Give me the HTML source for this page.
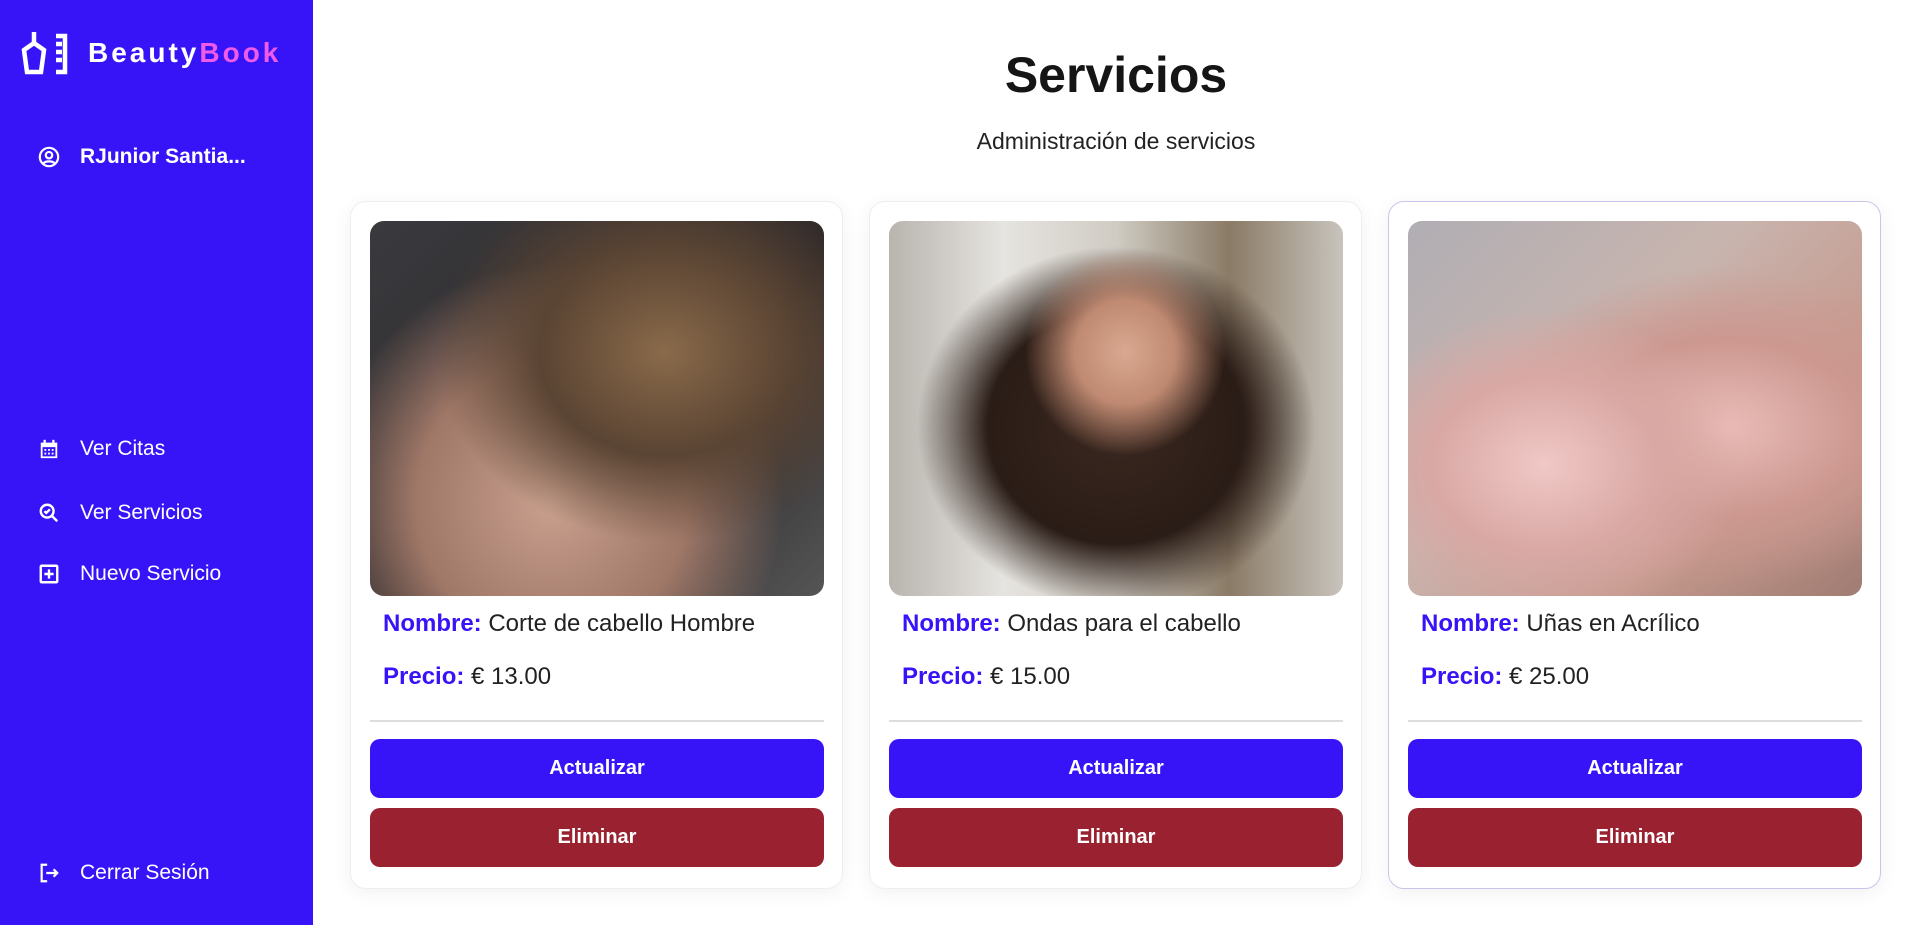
<!DOCTYPE html>
<html><head><meta charset="utf-8"><style>
*{box-sizing:border-box;margin:0;padding:0}
body{width:1919px;height:925px;overflow:hidden;background:#fff;font-family:"Liberation Sans",sans-serif;position:relative}
.side{position:absolute;left:0;top:0;width:313px;height:925px;background:#3714f7;color:#fff}
.logo{position:absolute;left:20px;top:30px;display:flex;align-items:center}
.logo span{font-size:28px;font-weight:900;letter-spacing:3px;margin-left:18px}
.item{position:absolute;left:38px;display:flex;align-items:center;font-size:21px}
.item svg{margin-right:20px}
h1{position:absolute;left:313px;right:0;top:46px;text-align:center;font-size:50px;font-weight:bold;color:#151515}
.sub{position:absolute;left:313px;right:0;top:128px;text-align:center;font-size:23px;color:#222}
.card{position:absolute;top:201px;width:493px;height:688px;border:1px solid #eee;border-radius:16px;background:#fff;box-shadow:0 4px 20px rgba(0,0,0,.06)}
.img{position:absolute;left:19px;top:19px;width:454px;height:375px;border-radius:14px}
.t{position:absolute;left:32px;font-size:24px;color:#222}
.t b{color:#3714f7}
.hr{position:absolute;left:19px;width:454px;top:518px;border-top:2px solid #ddd}
.btn{position:absolute;left:19px;width:454px;height:59px;border-radius:10px;color:#fff;font-weight:bold;font-size:20px;display:flex;align-items:center;justify-content:center}
.a{top:537px;background:#3714f7}.e{top:606px;background:#9a2230}
</style></head><body>
<div class="side">
<div class="logo"><svg width="50" height="46" viewBox="0 0 50 46" fill="none" stroke="#fff" stroke-width="4.5"><path d="M14 2v11M4 20l10-7 10 7-3 22H7z"/><path d="M36 6h9v36h-9M36 14h6M36 22h6M36 30h6"/></svg><span>Beauty<span style="margin:0;color:#f05ae8;letter-spacing:3px">Book</span></span></div>
<div class="item" style="top:145px;font-weight:bold;font-size:21px"><svg width="22" height="22" viewBox="0 0 24 24" fill="none" stroke="#fff" stroke-width="2.4"><circle cx="12" cy="12" r="10"/><circle cx="12" cy="10" r="3.5"/><path d="M6 19c2-3 10-3 12 0"/></svg>RJunior Santia...</div>
<div class="item" style="top:437px"><svg width="22" height="22" viewBox="0 0 24 24" fill="#fff"><path d="M3 5h18v17H3zM5 10v10h14V10z"/><rect x="6" y="2" width="2.5" height="4"/><rect x="15.5" y="2" width="2.5" height="4"/><rect x="7" y="12" width="2" height="2"/><rect x="11" y="12" width="2" height="2"/><rect x="15" y="12" width="2" height="2"/><rect x="7" y="16" width="2" height="2"/><rect x="11" y="16" width="2" height="2"/><rect x="15" y="16" width="2" height="2"/></svg>Ver Citas</div>
<div class="item" style="top:501px"><svg width="22" height="22" viewBox="0 0 24 24" fill="none" stroke="#fff" stroke-width="2.6"><circle cx="10" cy="10" r="7"/><path d="M15 15l6 6M7 10l2 2 4-4"/></svg>Ver Servicios</div>
<div class="item" style="top:562px"><svg width="22" height="22" viewBox="0 0 24 24" fill="none" stroke="#fff" stroke-width="2.6"><rect x="3" y="3" width="18" height="18" rx="1"/><path d="M12 7v10M7 12h10"/></svg>Nuevo Servicio</div>
<div class="item" style="top:861px"><svg width="22" height="22" viewBox="0 0 24 24" fill="none" stroke="#fff" stroke-width="2.4"><path d="M10 3H4v18h6M9 12h12M17 8l4 4-4 4"/></svg>Cerrar Sesión</div>
</div>
<h1>Servicios</h1>
<div class="sub">Administración de servicios</div>

<div class="card" style="left:350px"><div class="img" style="background:radial-gradient(ellipse at 65% 35%,#8a6a4a 0,#5a4433 30%,transparent 55%),radial-gradient(ellipse at 40% 75%,#c9a08e 0,#a07868 35%,transparent 60%),linear-gradient(135deg,#3a3a3e,#2a2628 60%,#555)"></div>
<div class="t" style="top:408px"><b>Nombre:</b> Corte de cabello Hombre</div>
<div class="t" style="top:461px"><b>Precio:</b> € 13.00</div>
<div class="hr"></div><div class="btn a">Actualizar</div><div class="btn e">Eliminar</div></div>

<div class="card" style="left:869px"><div class="img" style="background:radial-gradient(ellipse at 52% 35%,#d9a890 0,#c08a72 15%,transparent 30%),radial-gradient(ellipse at 50% 55%,#3a2820 0,#2a1c16 40%,transparent 62%),linear-gradient(90deg,#b8b4ae,#e6e4e0 25%,#d0ccc4 50%,#8a7a66 75%,#c8c4bc)"></div>
<div class="t" style="top:408px"><b>Nombre:</b> Ondas para el cabello</div>
<div class="t" style="top:461px"><b>Precio:</b> € 15.00</div>
<div class="hr"></div><div class="btn a">Actualizar</div><div class="btn e">Eliminar</div></div>

<div class="card" style="left:1388px;border-color:#c9c6ee"><div class="img" style="background:radial-gradient(ellipse at 30% 65%,#f0c8c6 0,#d9a8a4 25%,transparent 45%),radial-gradient(ellipse at 70% 55%,#eabcb8 0,#cc9890 30%,transparent 55%),linear-gradient(135deg,#b0aeb4,#c8b4ae 40%,#c69a8e 70%,#a07c72)"></div>
<div class="t" style="top:408px"><b>Nombre:</b> Uñas en Acrílico</div>
<div class="t" style="top:461px"><b>Precio:</b> € 25.00</div>
<div class="hr"></div><div class="btn a">Actualizar</div><div class="btn e">Eliminar</div></div>
</body></html>
